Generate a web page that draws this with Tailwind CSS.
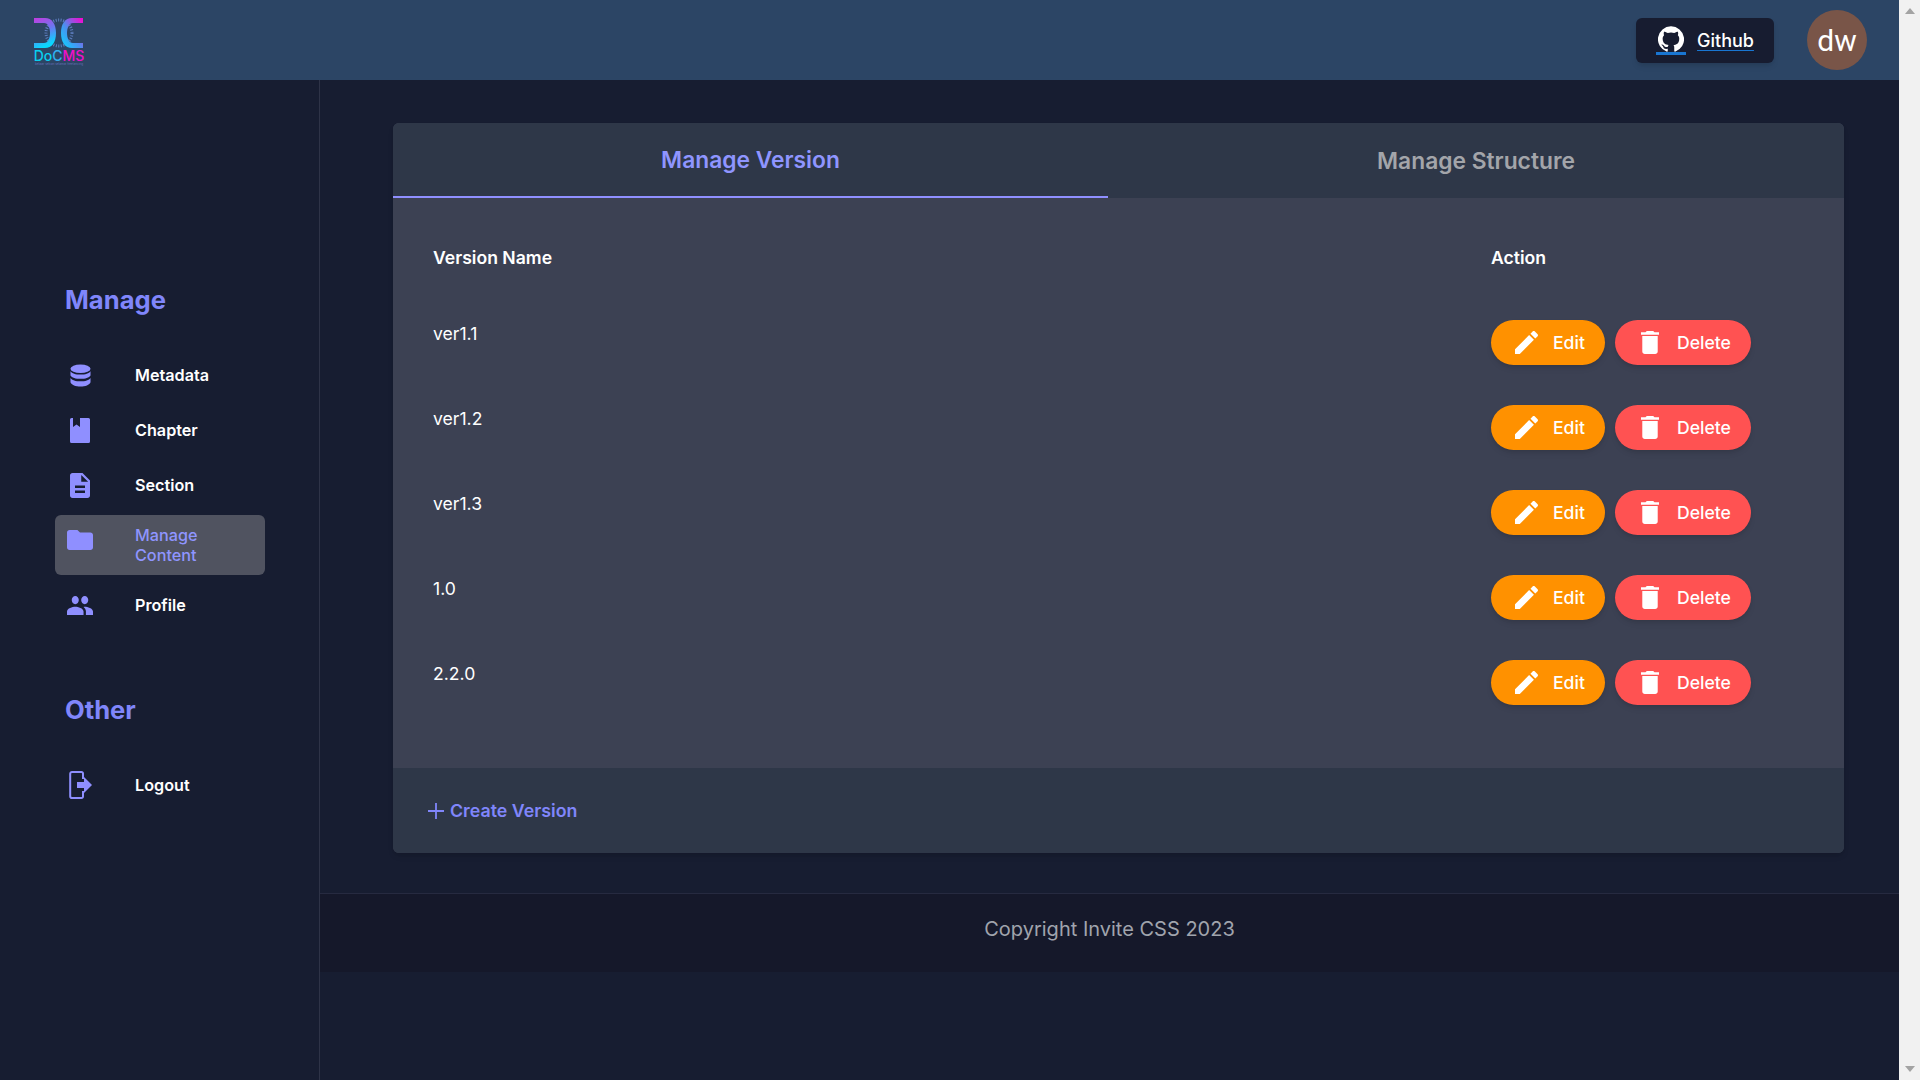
<!DOCTYPE html>
<html lang="en">
<head>
<meta charset="utf-8">
<title>DoCMS</title>
<script src="https://cdn.jsdelivr.net/npm/@tailwindcss/browser@4"></script>
</head>
<body class="m-0 overflow-hidden font-['Inter',sans-serif]">
<div class="flex h-[1080px] w-[1920px]">
  <div class="flex h-full w-[1899px] flex-col bg-[#171d31]">
    <header class="flex h-20 shrink-0 items-center justify-between bg-[#2c4565] pl-[33px] pr-[32px]">
      <div class="mt-[3px] flex w-[52px] flex-col items-center">
        <svg width="50" height="30" viewBox="0 0 50 30" class="block">
          <defs>
            <linearGradient id="lg1" x1="0" y1="0" x2="0.3" y2="1"><stop offset="0" stop-color="#c43be0"/><stop offset="0.5" stop-color="#6a78f0"/><stop offset="1" stop-color="#08d8ff"/></linearGradient>
            <linearGradient id="lg2" x1="1" y1="0" x2="0" y2="1"><stop offset="0" stop-color="#ff00d0"/><stop offset="0.55" stop-color="#4a90f0"/><stop offset="1" stop-color="#08d8ff"/></linearGradient>
          </defs>
          <circle cx="25" cy="15" r="13" fill="none" stroke="#5f7fc0" stroke-width="3" stroke-dasharray="1 1.500"/>
          <path d="M0 0H11C18 0 22 6 22 15S18 30 11 30H0V25H10C14 25 16 20 16 15S14 5 10 5H0Z" fill="url(#lg1)"/>
          <path d="M49 0H38C31 0 27 6 27 15S31 30 38 30H49V25H39C35 25 33 20 33 15S35 5 39 5H49Z" fill="url(#lg2)"/>
        </svg>
        <div class="mt-[1px] text-[14px] leading-[13px] font-medium text-[#08d0f0]">Do<span class="text-[#30b0f0]">C</span><span class="text-[#f010c8]">MS</span></div>
        <div class="mt-[1px] text-[3px] leading-[3px] whitespace-nowrap text-[#8f8fe0]/60">belajar sekian selamat freelancing</div>
      </div>
      <div class="flex items-center gap-[33px]">
        <a class="flex h-[45px] w-[138px] items-center justify-center gap-[11px] rounded-md bg-[#171c30] text-[18px] font-medium text-white shadow-md">
          <span class="border-b-[3px] border-[#1976d2] px-[2px]">
            <svg width="26" height="26" viewBox="0 0 24 24" fill="#fff" class="block"><path d="M12 .3a12 12 0 0 0-3.800 23.400c.6.1.8-.3.8-.6v-2c-3.300.7-4-1.600-4-1.600-.6-1.400-1.400-1.800-1.400-1.800-1-.7.1-.7.1-.7 1.200 0 1.900 1.200 1.900 1.200 1 1.800 2.800 1.300 3.500 1 0-.8.4-1.300.7-1.600-2.700-.3-5.500-1.300-5.500-6 0-1.200.5-2.300 1.300-3.100-.2-.4-.6-1.600 0-3.200 0 0 1-.3 3.400 1.200a11.500 11.500 0 0 1 6 0c2.300-1.500 3.300-1.200 3.300-1.200.6 1.600.2 2.800 0 3.200.9.8 1.300 1.900 1.300 3.200 0 4.600-2.800 5.600-5.500 5.900.5.4.9 1 .9 2.200v3.300c0 .3.1.7.8.6A12 12 0 0 0 12 .3"/></svg>
          </span>
          <span class="mt-[1px] underline decoration-[#1976d2] underline-offset-[3px]">Github</span>
        </a>
        <div class="flex h-[60px] w-[60px] items-center justify-center rounded-full bg-[#795548] font-['Roboto',sans-serif] text-[30px] text-white">dw</div>
      </div>
    </header>
    <div class="flex min-h-0 flex-1">
      <aside class="w-[320px] shrink-0 border-r border-[#2e3347] pt-[205px]">
        <div class="pl-[65px] text-[25.6px] leading-[30px] font-bold text-[#8086fb]">Manage</div>
        <nav class="mt-[33px] ml-[55px] flex w-[210px] flex-col text-[16.2px] font-semibold text-white">
          <a class="flex h-[55px] items-center">
            <span class="w-[80px] pl-[15px]">
              <svg width="21" height="23" viewBox="0 0 22 24" preserveAspectRatio="none" fill="#8f8fff" class="block"><ellipse cx="11" cy="5" rx="10.500" ry="4.500"/><path d="M.5 7.500C2 10 6 11 11 11s9-1 10.500-3.500V12c-1.500 2.500-5.500 3.500-10.500 3.500S2 14.500.5 12Z"/><path d="M.5 14.500C2 17 6 18 11 18s9-1 10.500-3.500V19c-1 2.800-5.500 4.500-10.500 4.500S1.500 21.800.5 19Z"/></svg>
            </span>
            <span>Metadata</span>
          </a>
          <a class="flex h-[55px] items-center">
            <span class="w-[80px] pl-[15px]">
              <svg width="20" height="25" viewBox="0 0 20 25" fill="#8f8fff" class="block"><path d="M1.500 0H3v9l3.500-2.500L10 9V0h8.500A1.500 1.500 0 0 1 20 1.500v22a1.500 1.500 0 0 1-1.500 1.500h-17A1.500 1.500 0 0 1 0 23.500v-22A1.500 1.500 0 0 1 1.500 0Z"/></svg>
            </span>
            <span>Chapter</span>
          </a>
          <a class="flex h-[55px] items-center">
            <span class="w-[80px] pl-[15px]">
              <svg width="20" height="25" viewBox="4 2 16 20" preserveAspectRatio="none" fill="#8f8fff" class="block"><path d="M14 2H6c-1.100 0-1.990.900-1.990 2L4 20c0 1.100.890 2 1.990 2H18c1.100 0 2-.900 2-2V8l-6-6zm2 16H8v-2h8v2zm0-4H8v-2h8v2zm-3-5V3.500L18.500 9H13z"/></svg>
            </span>
            <span>Section</span>
          </a>
          <a class="mt-[2px] flex h-[60px] rounded-md bg-[#505360] pt-[10px] leading-5 font-medium text-[#8f95ff]">
            <span class="w-[80px] pl-[12px]">
              <svg width="26" height="20" viewBox="2 4 20 16" preserveAspectRatio="none" fill="#8f8fff" class="block mt-[5px]"><path d="M10 4H4c-1.100 0-1.990.900-1.990 2L2 18c0 1.100.900 2 2 2h16c1.100 0 2-.900 2-2V8c0-1.100-.900-2-2-2h-8l-2-2z"/></svg>
            </span>
            <span class="w-[90px]">Manage Content</span>
          </a>
          <a class="flex h-[60px] items-center">
            <span class="w-[80px] pl-[12px]">
              <svg width="26" height="19" viewBox="1 5 22 14" preserveAspectRatio="none" fill="#8f8fff" class="block"><path d="M16 11c1.660 0 2.990-1.340 2.990-3S17.660 5 16 5c-1.660 0-3 1.340-3 3s1.340 3 3 3zm-8 0c1.660 0 2.990-1.340 2.990-3S9.660 5 8 5C6.340 5 5 6.340 5 8s1.340 3 3 3zm0 2c-2.330 0-7 1.170-7 3.500V19h14v-2.500c0-2.330-4.670-3.500-7-3.500zm8 0c-.290 0-.620.020-.970.050 1.160.840 1.970 1.970 1.970 3.450V19h6v-2.500c0-2.330-4.670-3.500-7-3.500z"/></svg>
            </span>
            <span>Profile</span>
          </a>
        </nav>
        <div class="mt-[60px] pl-[65px] text-[25.6px] leading-[30px] font-bold text-[#8086fb]">Other</div>
        <a class="mt-[30px] ml-[55px] flex h-[60px] w-[210px] items-center text-[16.2px] font-semibold text-white">
          <span class="w-[80px] pl-[14px]">
            <svg width="24" height="28" viewBox="0 0 24 28" fill="none" class="block"><path d="M14 8V2.500a1.500 1.500 0 0 0-1.500-1.500H3A1.800 1.800 0 0 0 1.200 2.800v22.400A1.800 1.800 0 0 0 3 27h9.500a1.500 1.500 0 0 0 1.500-1.500V20" stroke="#8f8fff" stroke-width="2"/><path d="M8 11h7V6l8 8-8 8v-5H8Z" fill="#8f8fff"/></svg>
          </span>
          <span>Logout</span>
        </a>
      </aside>
      <main class="flex min-w-0 flex-1 flex-col">
        <section class="mt-[43px] ml-[73px] mr-[55px] overflow-hidden rounded-md bg-[#3c4153] shadow-md">
          <div class="flex h-[75px] bg-[#2e3748] text-[22.8px] font-semibold">
            <div class="flex w-[715px] items-center justify-center border-b-2 border-[#8f8fff] pt-[2px] text-[#8f95ff]">Manage Version</div>
            <div class="flex flex-1 items-center justify-center pt-[2px] text-[#a3a5aa]">Manage Structure</div>
          </div>
          <div class="h-[570px] px-[40px] pt-[40px] text-white">
            <div class="flex h-[40px] items-center text-[17.6px] font-semibold">
              <div class="w-[1058px]">Version Name</div>
              <div>Action</div>
            </div>
            <div class="mt-[42px] flex flex-col gap-[40px] text-[17.6px]">
              <div class="flex h-[45px]"><div class="w-[1058px] pt-[1px]">ver1.1</div><div class="flex gap-[10px]">
                <button class="flex h-[45px] w-[114px] items-center rounded-full bg-[#ff9100] pl-[24px] font-medium shadow-md"><svg width="23" height="23" viewBox="3 3 18 18" fill="#fff" class="block"><path d="M3 17.250V21h3.750L17.810 9.940l-3.750-3.750L3 17.250zM20.710 7.040c.390-.390.390-1.020 0-1.410l-2.340-2.340c-.390-.390-1.020-.390-1.410 0l-1.830 1.830 3.750 3.750 1.830-1.830z"/></svg><span class="ml-[15px] mt-[1px]">Edit</span></button>
                <button class="flex h-[45px] w-[136px] items-center rounded-full bg-[#ff5252] pl-[26px] font-medium shadow-md"><svg width="18" height="23" viewBox="5 3 14 18" preserveAspectRatio="none" fill="#fff" class="block"><path d="M6 19c0 1.100.900 2 2 2h8c1.100 0 2-.900 2-2V7H6v12zM19 4h-3.500l-1-1h-5l-1 1H5v2h14V4z"/></svg><span class="ml-[18px] mt-[1px]">Delete</span></button>
              </div></div>
              <div class="flex h-[45px]"><div class="w-[1058px] pt-[1px]">ver1.2</div><div class="flex gap-[10px]">
                <button class="flex h-[45px] w-[114px] items-center rounded-full bg-[#ff9100] pl-[24px] font-medium shadow-md"><svg width="23" height="23" viewBox="3 3 18 18" fill="#fff" class="block"><path d="M3 17.250V21h3.750L17.810 9.940l-3.750-3.750L3 17.250zM20.710 7.040c.390-.390.390-1.020 0-1.410l-2.340-2.340c-.390-.390-1.020-.390-1.410 0l-1.830 1.830 3.750 3.750 1.830-1.830z"/></svg><span class="ml-[15px] mt-[1px]">Edit</span></button>
                <button class="flex h-[45px] w-[136px] items-center rounded-full bg-[#ff5252] pl-[26px] font-medium shadow-md"><svg width="18" height="23" viewBox="5 3 14 18" preserveAspectRatio="none" fill="#fff" class="block"><path d="M6 19c0 1.100.900 2 2 2h8c1.100 0 2-.900 2-2V7H6v12zM19 4h-3.500l-1-1h-5l-1 1H5v2h14V4z"/></svg><span class="ml-[18px] mt-[1px]">Delete</span></button>
              </div></div>
              <div class="flex h-[45px]"><div class="w-[1058px] pt-[1px]">ver1.3</div><div class="flex gap-[10px]">
                <button class="flex h-[45px] w-[114px] items-center rounded-full bg-[#ff9100] pl-[24px] font-medium shadow-md"><svg width="23" height="23" viewBox="3 3 18 18" fill="#fff" class="block"><path d="M3 17.250V21h3.750L17.810 9.940l-3.750-3.750L3 17.250zM20.710 7.040c.390-.390.390-1.020 0-1.410l-2.340-2.340c-.390-.390-1.020-.390-1.410 0l-1.830 1.830 3.750 3.750 1.830-1.830z"/></svg><span class="ml-[15px] mt-[1px]">Edit</span></button>
                <button class="flex h-[45px] w-[136px] items-center rounded-full bg-[#ff5252] pl-[26px] font-medium shadow-md"><svg width="18" height="23" viewBox="5 3 14 18" preserveAspectRatio="none" fill="#fff" class="block"><path d="M6 19c0 1.100.900 2 2 2h8c1.100 0 2-.900 2-2V7H6v12zM19 4h-3.500l-1-1h-5l-1 1H5v2h14V4z"/></svg><span class="ml-[18px] mt-[1px]">Delete</span></button>
              </div></div>
              <div class="flex h-[45px]"><div class="w-[1058px] pt-[1px]">1.0</div><div class="flex gap-[10px]">
                <button class="flex h-[45px] w-[114px] items-center rounded-full bg-[#ff9100] pl-[24px] font-medium shadow-md"><svg width="23" height="23" viewBox="3 3 18 18" fill="#fff" class="block"><path d="M3 17.250V21h3.750L17.810 9.940l-3.750-3.750L3 17.250zM20.710 7.040c.390-.390.390-1.020 0-1.410l-2.340-2.340c-.390-.390-1.020-.390-1.410 0l-1.830 1.830 3.750 3.750 1.830-1.830z"/></svg><span class="ml-[15px] mt-[1px]">Edit</span></button>
                <button class="flex h-[45px] w-[136px] items-center rounded-full bg-[#ff5252] pl-[26px] font-medium shadow-md"><svg width="18" height="23" viewBox="5 3 14 18" preserveAspectRatio="none" fill="#fff" class="block"><path d="M6 19c0 1.100.900 2 2 2h8c1.100 0 2-.900 2-2V7H6v12zM19 4h-3.500l-1-1h-5l-1 1H5v2h14V4z"/></svg><span class="ml-[18px] mt-[1px]">Delete</span></button>
              </div></div>
              <div class="flex h-[45px]"><div class="w-[1058px] pt-[1px]">2.2.0</div><div class="flex gap-[10px]">
                <button class="flex h-[45px] w-[114px] items-center rounded-full bg-[#ff9100] pl-[24px] font-medium shadow-md"><svg width="23" height="23" viewBox="3 3 18 18" fill="#fff" class="block"><path d="M3 17.250V21h3.750L17.810 9.940l-3.750-3.750L3 17.250zM20.710 7.040c.390-.390.390-1.020 0-1.410l-2.340-2.340c-.390-.390-1.020-.390-1.410 0l-1.830 1.830 3.750 3.750 1.830-1.830z"/></svg><span class="ml-[15px] mt-[1px]">Edit</span></button>
                <button class="flex h-[45px] w-[136px] items-center rounded-full bg-[#ff5252] pl-[26px] font-medium shadow-md"><svg width="18" height="23" viewBox="5 3 14 18" preserveAspectRatio="none" fill="#fff" class="block"><path d="M6 19c0 1.100.900 2 2 2h8c1.100 0 2-.900 2-2V7H6v12zM19 4h-3.500l-1-1h-5l-1 1H5v2h14V4z"/></svg><span class="ml-[18px] mt-[1px]">Delete</span></button>
              </div></div>
            </div>
          </div>
          <div class="flex h-[85px] items-center gap-[6px] bg-[#2e3748] pl-[35px] text-[17.8px] font-semibold text-[#8086fb]">
            <svg width="16" height="16" viewBox="0 0 16 16" fill="none" stroke="#8086fb" stroke-width="1.800" class="block"><path d="M8 0v16M0 8h16"/></svg>
            <span class="mt-[1px]">Create Version</span>
          </div>
        </section>
        <footer class="mt-[40px] flex h-[79px] items-center justify-center border-t border-[#262a40] bg-[#15182a] pb-[8px] text-[20px] text-[#a0a4ad]">Copyright Invite CSS 2023</footer>
      </main>
    </div>
  </div>
  <div class="flex h-full w-[21px] shrink-0 flex-col items-center justify-between bg-[#f1f1f1] py-[8px]">
    <svg width="10" height="6" viewBox="0 0 10 6" fill="#a3a3a3" class="block"><path d="M5 0l5 6H0Z"/></svg>
    <svg width="10" height="6" viewBox="0 0 10 6" fill="#a3a3a3" class="block"><path d="M0 0h10L5 6Z"/></svg>
  </div>
</div>
</body>
</html>
